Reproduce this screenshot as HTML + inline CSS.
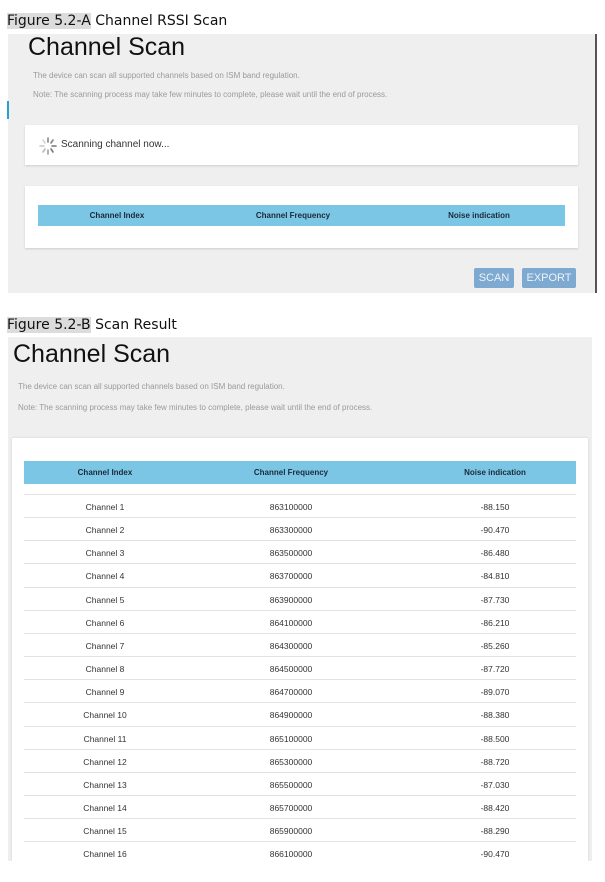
<!DOCTYPE html>
<html><head><meta charset="utf-8"><style>
*{margin:0;padding:0;box-sizing:border-box}
body{width:605px;height:882px;background:#fff;position:relative;overflow:hidden;font-family:"Liberation Sans",sans-serif}
.a{position:absolute}
.cap{font-family:"DejaVu Sans","Liberation Sans",sans-serif;font-size:14px;color:#111;white-space:nowrap}
.hl{background:#dcdcdc}
.title{font-size:25px;color:#111;white-space:nowrap}
.note{font-size:8px;color:#9a9a9a;white-space:nowrap}
.hdr{background:#7cc6e5;font-size:8px;font-weight:bold;color:#1a2a3a}
.hdr span,.row span{position:absolute;transform:translateX(-50%);white-space:nowrap}
.row{position:absolute;left:24px;width:552px;height:23px;border-top:1px solid #e2e2e2;font-size:8.5px;color:#333}
.btn{background:#7ea9d0;color:#eef4fa;font-size:11px;text-align:center;line-height:20px;border-radius:2px}
</style></head><body>
<div class="a cap" style="left:7px;top:13px"><span class="hl">Figure 5.2-A</span> Channel RSSI Scan</div>
<div class="a" style="left:8px;top:34px;width:589px;height:259px;background:#efefef;border-right:2px solid #555"></div>
<div class="a" style="left:7px;top:101px;width:2px;height:18px;background:#2a9fd0"></div>
<div class="a title" style="left:28px;top:33px">Channel Scan</div>
<div class="a note" style="left:33px;top:71px">The device can scan all supported channels based on ISM band regulation.</div>
<div class="a note" style="left:33px;top:90px">Note: The scanning process may take few minutes to complete, please wait until the end of process.</div>
<div class="a" style="left:25px;top:125px;width:553px;height:40px;background:#fff;box-shadow:0 1px 2px #ccc"></div>
<svg class="a" style="left:38px;top:137px" width="20" height="18" viewBox="-10 -9 20 18">
<g stroke="#777" stroke-width="1.6" stroke-linecap="round">
<line x1="0" y1="-8" x2="0" y2="-4" opacity=".9"/><line x1="5" y1="-6" x2="3" y2="-3" opacity=".9"/><line x1="8" y1="0" x2="4" y2="0"/><line x1="5" y1="6" x2="3" y2="3"/><line x1="0" y1="8" x2="0" y2="4" opacity=".7"/><line x1="-5" y1="6" x2="-3" y2="3" opacity=".5"/><line x1="-8" y1="0" x2="-4" y2="0" opacity=".4"/><line x1="-5" y1="-6" x2="-3" y2="-3" opacity=".3"/></g></svg>
<div class="a" style="left:61px;top:139px;font-size:10px;color:#333">Scanning channel now...</div>
<div class="a" style="left:25px;top:186px;width:553px;height:62px;background:#fff;box-shadow:0 1px 2px #ccc"></div>
<div class="a hdr" style="left:38px;top:205px;width:527px;height:21px"><span style="left:79px;top:6px">Channel Index</span><span style="left:255px;top:6px">Channel Frequency</span><span style="left:441px;top:6px">Noise indication</span></div>
<div class="a btn" style="left:474px;top:268px;width:40px;height:20px">SCAN</div>
<div class="a btn" style="left:522px;top:268px;width:54px;height:20px">EXPORT</div>

<div class="a cap" style="left:7px;top:317px"><span class="hl">Figure 5.2-B</span> Scan Result</div>
<div class="a" style="left:8px;top:337px;width:584px;height:524px;background:#efefef"></div>
<div class="a title" style="left:13px;top:340px">Channel Scan</div>
<div class="a note" style="left:18px;top:382px">The device can scan all supported channels based on ISM band regulation.</div>
<div class="a note" style="left:18px;top:403px">Note: The scanning process may take few minutes to complete, please wait until the end of process.</div>
<div class="a" style="left:12px;top:438px;width:576px;height:423px;background:#fff;box-shadow:0 0 2px #ccc"></div>
<div class="a hdr" style="left:24px;top:461px;width:552px;height:23px"><span style="left:81px;top:7px">Channel Index</span><span style="left:267px;top:7px">Channel Frequency</span><span style="left:471px;top:7px">Noise indication</span></div>
<div id="rows"></div>
<div class="a" style="left:0;top:861px;width:605px;height:21px;background:#fff"></div>
<script>
var f=[863100000,863300000,863500000,863700000,863900000,864100000,864300000,864500000,864700000,864900000,865100000,865300000,865500000,865700000,865900000,866100000];
var n=["-88.150","-90.470","-86.480","-84.810","-87.730","-86.210","-85.260","-87.720","-89.070","-88.380","-88.500","-88.720","-87.030","-88.420","-88.290","-90.470"];
var h="";for(var i=0;i<16;i++){var t=494+i*23.15;h+='<div class="row" style="top:'+t+'px"><span style="left:81px;top:7px">Channel '+(i+1)+'</span><span style="left:267px;top:7px">'+f[i]+'</span><span style="left:471px;top:7px">'+n[i]+'</span></div>';}
document.getElementById("rows").innerHTML=h;
</script>
</body></html>
